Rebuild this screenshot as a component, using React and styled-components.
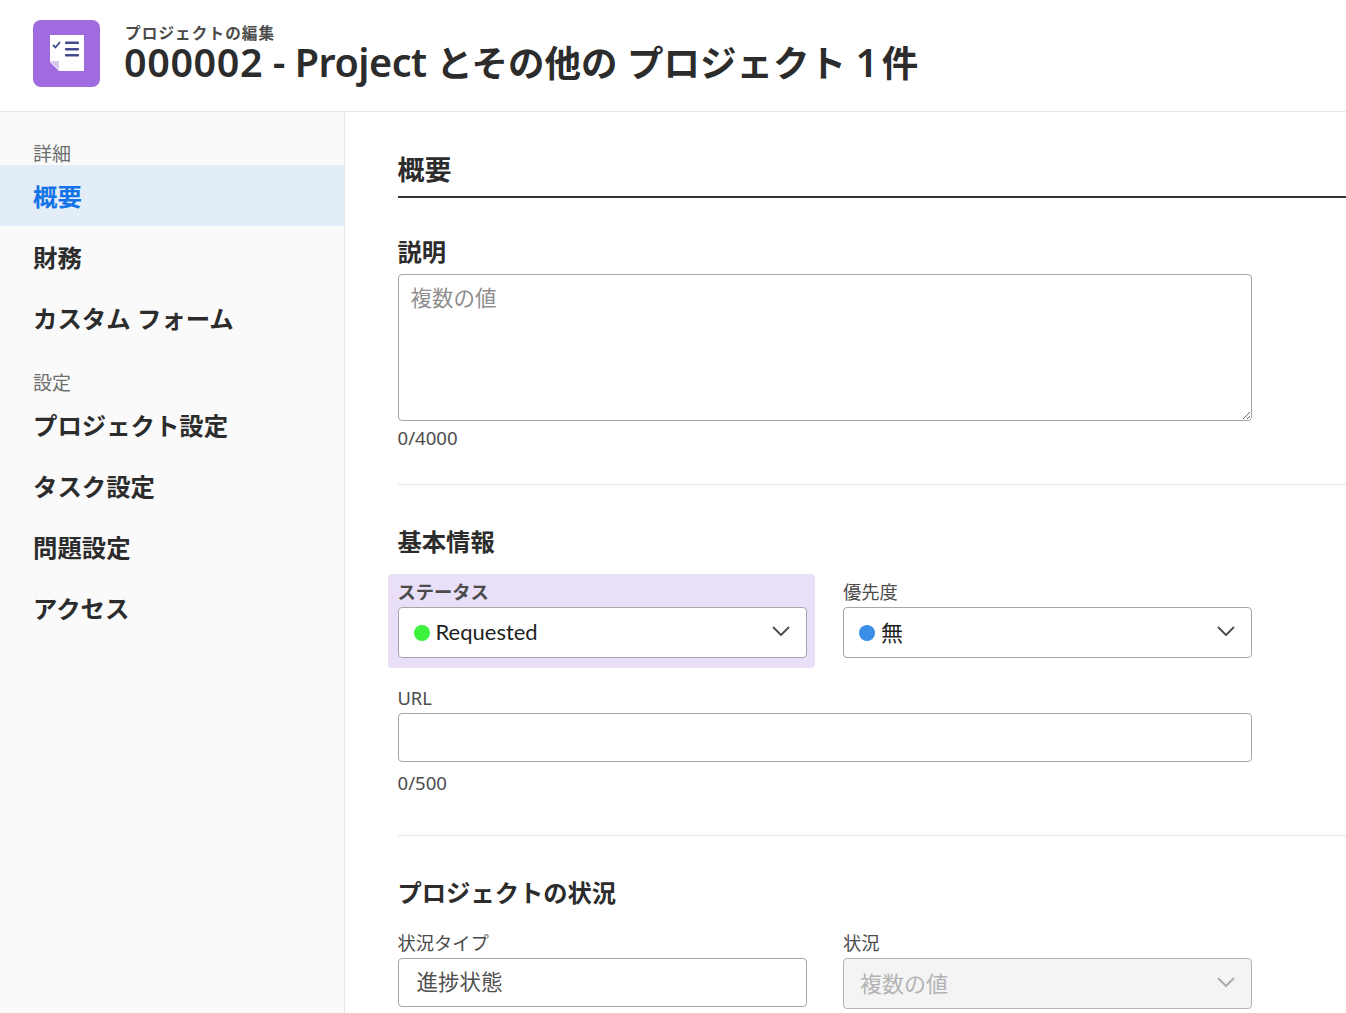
import React from 'react';
import styled, { createGlobalStyle } from 'styled-components';

const GlobalStyle = createGlobalStyle`
    html, body {
        margin: 0;
        padding: 0;
        background: #fff;
        height: 100%;
        overflow: hidden;
    }
    * {
        box-sizing: border-box;
    }
    body {
        font-family: 'Noto Sans', 'Noto Sans CJK JP', sans-serif;
        color: #2c2c2c;
    }
`;

const Page = styled.div`
    height: 1013px;
    display: flex;
    flex-direction: column;
    overflow: hidden;
`;

const Header = styled.header`
    height: 112px;
    flex: none;
    display: flex;
    align-items: flex-start;
    padding: 19.5px 0 0 33px;
    border-bottom: 1px solid #e8e8e8;
`;

const LogoBox = styled.div`
    width: 67px;
    height: 67px;
    border-radius: 8px;
    background: #9f6bdf;
    display: flex;
    align-items: center;
    justify-content: center;
    flex: none;
`;

const HeaderText = styled.div`
    margin-left: 24px;
    display: flex;
    flex-direction: column;
`;

const SubTitle = styled.div`
    font-size: 15.6px;
    letter-spacing: 1.1px;
    line-height: 20px;
    margin-top: 3px;
    font-weight: 700;
    color: #4b4b4b;
    margin-left: 1px;
    white-space: nowrap;
`;

const Title = styled.h1`
    margin: -1px 0 0;
    font-size: 36.5px;
    line-height: 40px;
    font-weight: 600;
    color: #2c2c2c;
    white-space: nowrap;
`;

const TitleLatin = styled.span`
    font-size: 39.5px;
    font-weight: 600;
    letter-spacing: ${p => p.$spacing ?? 0}px;
`;

const TitleCount = styled.span`
    word-spacing: -6px;
`;

const Body = styled.div`
    flex: 1;
    display: flex;
    min-height: 0;
`;

const Sidebar = styled.nav`
    width: 345px;
    flex: none;
    background: #fafafa;
    border-right: 1px solid #e8e8e8;
    padding-top: 31px;
`;

const SideLabel = styled.div`
    font-size: 19px;
    line-height: 22px;
    color: #6e6e6e;
    padding-left: 33px;
    margin-top: ${p => p.$top || 0}px;
`;

const SideItem = styled.div`
    height: 61px;
    display: flex;
    align-items: center;
    padding-left: 33px;
    font-size: 24.4px;
    font-weight: 700;
    color: ${p => (p.$active ? '#1473e6' : '#2c2c2c')};
    background: ${p => (p.$active ? '#e3edf8' : 'transparent')};
`;

const Main = styled.main`
    flex: 1;
    min-width: 0;
    padding: 36px 0 0 52.5px;
`;

const SectionHead = styled.h2`
    margin: 0;
    height: 50px;
    font-size: 27px;
    line-height: 44px;
    font-weight: 700;
    color: #2c2c2c;
    border-bottom: 2px solid #333;
`;

const GroupTitle = styled.h3`
    margin: ${p => p.$top}px 0 0;
    font-size: 24.3px;
    line-height: 36px;
    font-weight: 700;
    color: #2c2c2c;
`;

const Form = styled.div`
    width: 854.5px;
`;

const Row = styled.div`
    display: grid;
    grid-template-columns: 409px 409px;
    column-gap: 36.5px;
    margin-top: ${p => p.$top || 0}px;
`;

const Field = styled.div`
    position: relative;
    display: flex;
    flex-direction: column;
`;

const Highlight = styled.div`
    position: absolute;
    left: -9.5px;
    right: -8.5px;
    top: -6px;
    height: 94px;
    background: #eadff9;
    border-radius: 4px;
`;

const Label = styled.label`
    position: relative;
    display: block;
    font-size: 18.3px;
    line-height: 24px;
    height: 24px;
    color: #4b4b4b;
    font-weight: ${p => (p.$bold ? 700 : 400)};
    margin-top: ${p => p.$top || 0}px;
`;

const Control = styled.div`
    position: relative;
    height: ${p => p.$h || 51}px;
    margin-top: 3px;
    border: 1.5px solid ${p => (p.$disabled ? '#b3b3b3' : '#a6a6a6')};
    border-radius: 4px;
    background: ${p => (p.$disabled ? '#f4f4f4' : '#fff')};
    display: flex;
    align-items: center;
    padding: 0 16px 0 ${p => p.$pl || 15}px;
    font-size: 22px;
    color: ${p => (p.$disabled ? '#b3b3b3' : '#1f1f1f')};
`;

const Dot = styled.span`
    width: 16px;
    height: 16px;
    border-radius: 50%;
    background: ${p => p.$color};
    margin-right: 6px;
    flex: none;
`;

const Value = styled.span`
    flex: 1;
    white-space: nowrap;
    font-family: 'Lato', 'Noto Sans CJK JP', sans-serif;
    margin-top: ${p => (p.$lift ? -p.$lift * 2 : 0)}px;
`;

const PlainValue = styled.span`
    flex: 1;
    white-space: nowrap;
    font-size: 21.5px;
    color: #505050;
    margin-top: -4px;
`;

const TextArea = styled.textarea`
    display: block;
    width: 854.5px;
    height: 147px;
    margin: 4px 0 0;
    padding: 9px 12px;
    border: 1.5px solid #a6a6a6;
    border-radius: 4px;
    font-family: inherit;
    font-size: 21.5px;
    line-height: 28px;
    outline: none;
    &::placeholder {
        color: #8e8e8e;
    }
`;

const Counter = styled.div`
    font-size: 18.6px;
    line-height: 26px;
    color: #4b4b4b;
    margin-top: ${p => p.$top}px;
`;

const Divider = styled.hr`
    margin: ${p => p.$top}px 0 0;
    border: none;
    border-top: 1px solid #e8e8e8;
`;

const ChevronIcon = styled.svg`
    flex: none;
    margin-top: -2px;
`;

const Chevron = ({ color = '#4b4b4b' }) => (
    <ChevronIcon width="18" height="11" viewBox="0 0 18 11" fill="none">
        <path d="M1.5 1.5L9 9L16.5 1.5" stroke={color} strokeWidth="1.8" strokeLinecap="round" strokeLinejoin="round" />
    </ChevronIcon>
);

const Logo = () => (
    <svg width="34" height="36" viewBox="0 0 34 36">
        <path d="M0 0H34V36H9L0 27Z" fill="#fff" />
        <path d="M0 26H9V35Z" fill="#d9c5ee" />
        <path d="M3 10L5.5 12.5L10 7" stroke="#3f4a8f" strokeWidth="1.8" fill="none" />
        <rect x="15" y="6.5" width="14" height="2.6" rx="1" fill="#3f4a8f" />
        <rect x="15" y="13" width="14" height="2.6" rx="1" fill="#3f4a8f" />
        <rect x="15" y="19" width="14" height="2.6" rx="1" fill="#3f4a8f" />
    </svg>
);

export default function App() {
    return (
        <>
            <GlobalStyle />
            <Page>
                <Header>
                    <LogoBox>
                        <Logo />
                    </LogoBox>
                    <HeaderText>
                        <SubTitle>プロジェクトの編集</SubTitle>
                        <Title>
                            <TitleLatin $spacing={0.6}>000002</TitleLatin> <TitleLatin $spacing={-0.45}>- Project</TitleLatin> とその他の プロジェクト <TitleCount><TitleLatin>1</TitleLatin> 件</TitleCount>
                        </Title>
                    </HeaderText>
                </Header>
                <Body>
                    <Sidebar>
                        <SideLabel>詳細</SideLabel>
                        <SideItem $active>概要</SideItem>
                        <SideItem>財務</SideItem>
                        <SideItem>カスタム フォーム</SideItem>
                        <SideLabel $top={24}>設定</SideLabel>
                        <SideItem>プロジェクト設定</SideItem>
                        <SideItem>タスク設定</SideItem>
                        <SideItem>問題設定</SideItem>
                        <SideItem>アクセス</SideItem>
                    </Sidebar>
                    <Main>
                        <SectionHead>概要</SectionHead>
                        <Form>
                            <GroupTitle $top={36}>説明</GroupTitle>
                            <TextArea placeholder="複数の値" />
                            <Counter $top={4}>0/4000</Counter>
                        </Form>
                        <Divider $top={33} />
                        <Form>
                            <GroupTitle $top={39}>基本情報</GroupTitle>
                            <Row $top={20}>
                                <Field>
                                    <Highlight />
                                    <Label $bold>ステータス</Label>
                                    <Control>
                                        <Dot $color="#3cf23c" />
                                        <Value $lift={1}>Requested</Value>
                                        <Chevron />
                                    </Control>
                                </Field>
                                <Field>
                                    <Label>優先度</Label>
                                    <Control>
                                        <Dot $color="#3b8ee8" />
                                        <Value $lift={2}>無</Value>
                                        <Chevron />
                                    </Control>
                                </Field>
                            </Row>
                            <Label $top={28}>URL</Label>
                            <Control $h={49} />
                            <Counter $top={8}>0/500</Counter>
                        </Form>
                        <Divider $top={39} />
                        <Form>
                            <GroupTitle $top={39}>プロジェクトの状況</GroupTitle>
                            <Row $top={20}>
                                <Field>
                                    <Label>状況タイプ</Label>
                                    <Control $h={49} $pl={18}>
                                        <PlainValue>進捗状態</PlainValue>
                                    </Control>
                                </Field>
                                <Field>
                                    <Label>状況</Label>
                                    <Control $pl={16} $disabled>
                                        <Value $lift={2}>複数の値</Value>
                                        <Chevron color="#a8a8a8" />
                                    </Control>
                                </Field>
                            </Row>
                        </Form>
                    </Main>
                </Body>
            </Page>
        </>
    );
}
